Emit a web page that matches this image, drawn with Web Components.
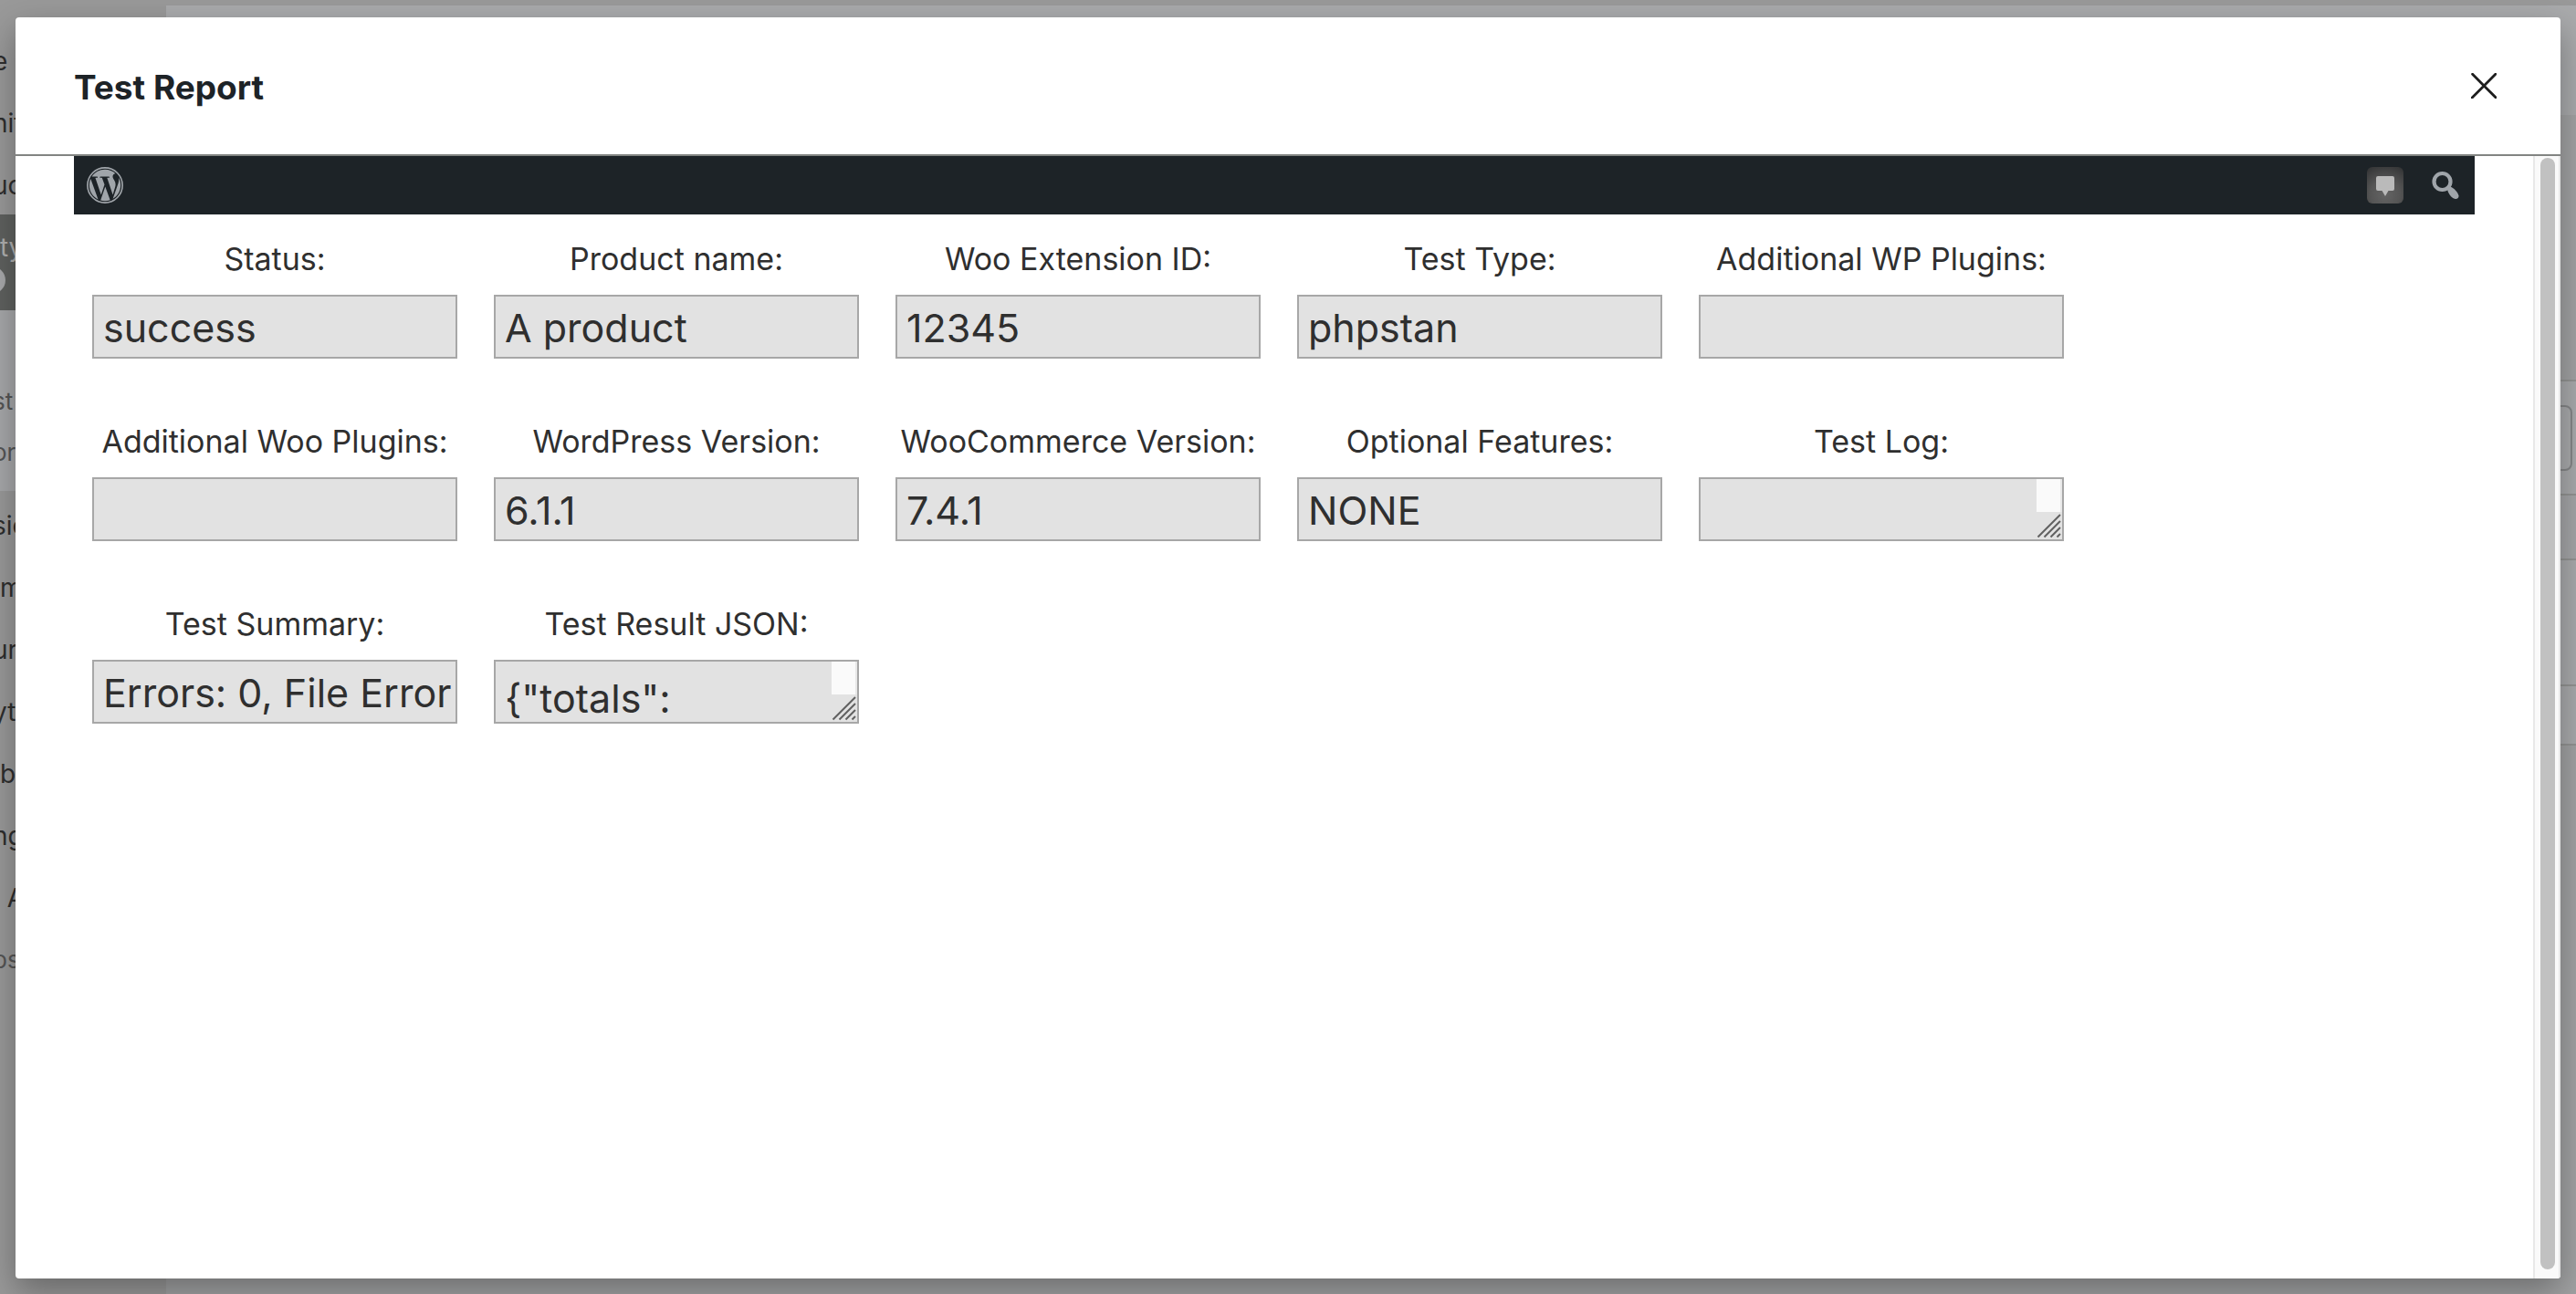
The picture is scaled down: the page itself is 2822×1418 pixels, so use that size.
<!DOCTYPE html>
<html lang="en">
<head>
<meta charset="utf-8">
<title>Test Report</title>
<style>
  html, body { height: 100%; }
  body { margin: 0; overflow: hidden; font-family: Inter, "Noto Sans", sans-serif; color: #2f2f2f; background: #9a9a9a; }
</style>
</head>
<body>
<admin-page>
  <admin-menu slot="menu"></admin-menu>
  <admin-backdrop slot="content"></admin-backdrop>
  <report-modal slot="modal" heading="Test Report">
    <admin-bar></admin-bar>
    <report-form>
      <report-field label="Status:" value="success"></report-field>
      <report-field label="Product name:" value="A product"></report-field>
      <report-field label="Woo Extension ID:" value="12345"></report-field>
      <report-field label="Test Type:" value="phpstan"></report-field>
      <report-field label="Additional WP Plugins:" value=""></report-field>
      <report-field label="Additional Woo Plugins:" value=""></report-field>
      <report-field label="WordPress Version:" value="6.1.1"></report-field>
      <report-field label="WooCommerce Version:" value="7.4.1"></report-field>
      <report-field label="Optional Features:" value="NONE"></report-field>
      <report-field label="Test Log:" value="" multiline></report-field>
      <report-field label="Test Summary:" value="Errors: 0, File Error"></report-field>
      <report-field label="Test Result JSON:" value='{"totals":' multiline></report-field>
    </report-form>
  </report-modal>
</admin-page>

<script>
class BaseElement extends HTMLElement {
  connectedCallback() {
    if (!this.shadowRoot) this.attachShadow({ mode: "open" }).innerHTML = this.render();
  }
}

customElements.define("admin-page", class extends BaseElement {
  render() {
    return `
      <style>
        :host { display: flex; flex-direction: column; height: 100vh; position: relative; overflow: hidden; }
        .top { flex: none; height: 6px; background: #999; }
        .body { flex: 1; min-height: 0; display: flex; }
        ::slotted([slot="content"]) { flex: 1; }
        .overlay { position: absolute; inset: 0; display: flex; padding: 19px 17px 17px; }
        ::slotted([slot="modal"]) { flex: 1; min-width: 0; }
      </style>
      <div class="top"></div>
      <div class="body"><slot name="menu"></slot><slot name="content"></slot></div>
      <div class="overlay"><slot name="modal"></slot></div>`;
  }
});

customElements.define("admin-menu", class extends BaseElement {
  render() {
    return `
      <style>
        :host { display: block; flex: none; width: 182px; box-sizing: border-box; padding-top: 25px; background: #999; overflow: hidden; }
        ul { list-style: none; margin: 0; padding: 0; }
        li, a { display: block; }
        a { height: 68px; line-height: 72px; margin-left: -8px; font-size: 28px; color: #2e2e2e; text-decoration: none; white-space: pre; }
        .current { height: 105px; background: #5f615f; }
        .current a { height: 57px; color: #b0b0b0; }
        .badge { display: block; width: 36px; height: 30px; margin-left: -30px; border-radius: 15px; background: #a8a9ab; }
        .sub { padding: 71px 0 15px; margin-bottom: 2px; background: #a7a8aa; }
        .sub a { height: 56px; line-height: 58px; font-size: 26px; color: #555; }
        .last a { color: #555; font-size: 26px; }
      </style>
      <ul>
        <li><a href="#">e</a></li>
        <li><a href="#">nit</a></li>
        <li><a href="#">uc</a></li>
        <li class="current"><a href="#"> ty</a><span class="badge"></span></li>
        <li><ul class="sub"><li><a href="#">st</a></li><li><a href="#">or</a></li></ul></li>
        <li><a href="#">sic</a></li>
        <li><a href="#"> m</a></li>
        <li><a href="#">ur</a></li>
        <li><a href="#">yt</a></li>
        <li><a href="#"> ba</a></li>
        <li><a href="#">ng</a></li>
        <li><a href="#">  A</a></li>
        <li class="last"><a href="#">ps</a></li>
      </ul>`;
  }
});

customElements.define("admin-backdrop", class extends BaseElement {
  render() {
    return `
      <style>
        :host { display: flex; flex-direction: column; background: #a1a2a3; }
        div { box-sizing: border-box; flex: none; }
        .head { height: 120px; background: #a9aaac; }
        .gap { height: 290px; }
        .row { border-top: 2px solid #929392; background: #a9aaac; }
        .filter { height: 125px; padding: 26px 4px 0; }
        .box { height: 72px; border: 2px solid #858688; border-radius: 8px; }
        .th { height: 71px; background: #a5a6a8; }
        .one { height: 138px; }
        .two { height: 67px; border-bottom: 2px solid #929392; }
      </style>
      <div class="head"></div><div class="gap"></div>
      <div class="row filter"><div class="box"></div></div>
      <div class="row th"></div><div class="row one"></div><div class="row two"></div>`;
  }
});

customElements.define("report-modal", class extends BaseElement {
  render() {
    return `
      <style>
        :host { display: flex; flex-direction: column; background: #fff; border-radius: 4px; overflow: hidden; box-shadow: 0 14px 36px rgba(0,0,0,.32); }
        header { flex: none; height: 152px; box-sizing: border-box; display: flex; align-items: center; justify-content: space-between; padding: 0 64px; border-bottom: 2px solid #828482; }
        h1 { margin: 0; padding-top: 4px; font-size: 37px; line-height: 48px; font-weight: 700; color: #1d2327; }
        button { display: flex; padding: 6px; margin: 0; border: 0; background: none; }
        .scroll { flex: 1; min-height: 0; display: flex; }
        main { flex: 1; min-width: 0; padding: 0 64px; overflow: hidden; }
        .bar { flex: none; box-sizing: border-box; width: 30px; padding: 2px 4px 10px 6px; border: solid #e8e8e8; border-width: 0 2px; background: #fafafa; display: flex; }
        .thumb { flex: 1; border-radius: 8px; background: #c1c1c1; }
      </style>
      <header>
        <h1>${this.getAttribute("heading")}</h1>
        <button type="button" aria-label="Close">
          <svg width="28" height="28" viewBox="0 0 28 28" fill="none" stroke="#1e1e1e" stroke-width="2.8" stroke-linecap="round" stroke-linejoin="round"><path d="M1.6 1.2L14.2 14L26.8 1.2M1 27.2L14.2 14L27.4 27.2"/></svg>
        </button>
      </header>
      <div class="scroll">
        <main><slot></slot></main>
        <div class="bar" aria-hidden="true"><div class="thumb"></div></div>
      </div>`;
  }
});

customElements.define("admin-bar", class extends BaseElement {
  render() {
    return `
      <style>
        :host { display: flex; align-items: center; justify-content: space-between; height: 64px; padding: 0 14px; background: #1d2327; }
        nav { display: flex; align-items: center; gap: 28px; }
        a { display: flex; color: #a0a5aa; }
        .note { width: 40px; height: 40px; border-radius: 6px; background: radial-gradient(circle at 50% 75%, #646464 0, #555 45%, #303132 100%); }
      </style>
      <a href="#" aria-label="About WordPress">
        <svg width="40" height="40" viewBox="0 0 122.5 122.5" fill="currentColor"><path d="M8.708 61.26c0 20.802 12.089 38.779 29.619 47.298L13.258 39.872c-2.916 6.536-4.55 13.769-4.55 21.388zM96.74 58.608c0-6.495-2.333-10.993-4.334-14.494-2.664-4.329-5.161-7.995-5.161-12.324 0-4.831 3.664-9.328 8.825-9.328.233 0 .454.029.681.042-9.35-8.566-21.807-13.796-35.489-13.796-18.36 0-34.513 9.42-43.91 23.688 1.233.037 2.395.063 3.382.063 5.497 0 14.006-.667 14.006-.667 2.833-.167 3.167 3.994.337 4.329 0 0-2.847.335-6.015.501L48.2 93.547l11.501-34.493-8.188-22.434c-2.83-.166-5.511-.501-5.511-.501-2.832-.166-2.5-4.496.332-4.329 0 0 8.679.667 13.843.667 5.496 0 14.006-.667 14.006-.667 2.835-.167 3.168 3.994.337 4.329 0 0-2.853.335-6.015.501l18.992 56.494 5.242-17.517c2.272-7.269 4.001-12.49 4.001-16.989zM62.184 65.857l-15.768 45.819c4.708 1.384 9.687 2.141 14.846 2.141 6.12 0 11.989-1.058 17.452-2.979-.141-.225-.269-.464-.374-.724zM107.376 36.046c.226 1.674.354 3.471.354 5.404 0 5.333-.996 11.328-3.996 18.824l-16.053 46.413c15.624-9.111 26.133-26.038 26.133-45.426.001-9.137-2.333-17.729-6.438-25.215z"/><circle cx="61.25" cy="61.25" r="58.6" fill="none" stroke="currentColor" stroke-width="5"/></svg>
      </a>
      <nav>
        <a class="note" href="#" aria-label="Notifications">
          <svg width="40" height="40" viewBox="0 0 40 40" fill="#bababa"><path d="M12 10h16a2 2 0 0 1 2 2v12a2 2 0 0 1-2 2h-4.500L20 32l-3.500-6H12a2 2 0 0 1-2-2V12a2 2 0 0 1 2-2z"/></svg>
        </a>
        <a href="#" aria-label="Search">
          <svg width="36" height="40" viewBox="0 0 36 40"><circle cx="14.500" cy="16" r="9" fill="none" stroke="currentColor" stroke-width="4.200"/><path d="M20 24.200L23.300 21.400C27.500 23 31.500 27.500 32.500 31.500C32.800 34 30.500 35.600 28 34.800C24 33.500 21 29 20 24.200z" fill="currentColor"/></svg>
        </a>
      </nav>`;
  }
});

customElements.define("report-form", class extends BaseElement {
  render() {
    return `
      <style>
        form { display: flex; flex-wrap: wrap; gap: 60px 40px; padding: 18px 20px; }
      </style>
      <form><slot></slot></form>`;
  }
});

customElements.define("report-field", class extends BaseElement {
  render() {
    const value = this.getAttribute("value").replace(/"/g, "&quot;");
    const control = this.hasAttribute("multiline")
      ? `<textarea id="f" readonly>${value}</textarea>
         <div class="side" aria-hidden="true"><div class="track"></div>
           <svg width="28" height="30" viewBox="0 0 28 30" fill="none" stroke="#616161" stroke-width="2"><path d="M1.500 27.500L26 3M8.500 27.500L26 10M15.500 27.500L26 17M22.500 27.500L26 24"/></svg>
         </div>`
      : `<input id="f" type="text" readonly value="${value}">`;
    return `
      <style>
        :host { display: flex; flex-direction: column; gap: 8px; width: 400px; }
        label { font-size: 34px; line-height: 62px; text-align: center; white-space: nowrap; }
        .control { height: 70px; box-sizing: border-box; display: flex; border: 2px solid #a7a7a7; background: #e2e2e2; }
        input, textarea { flex: 1; min-width: 0; box-sizing: border-box; margin: 0; padding: 2px 0 0 10px; border: 0; outline: 0; background: none; font: inherit; font-size: 43px; color: inherit; }
        textarea { padding-top: 12px; line-height: 56px; resize: none; overflow: hidden; }
        .side { flex: none; width: 28px; display: flex; flex-direction: column; }
        .track { height: 36px; box-sizing: border-box; background: #fafafa; border-right: 2px solid #e8e8e8; }
      </style>
      <label for="f">${this.getAttribute("label")}</label>
      <div class="control">${control}</div>`;
  }
});
</script>
</body>
</html>
